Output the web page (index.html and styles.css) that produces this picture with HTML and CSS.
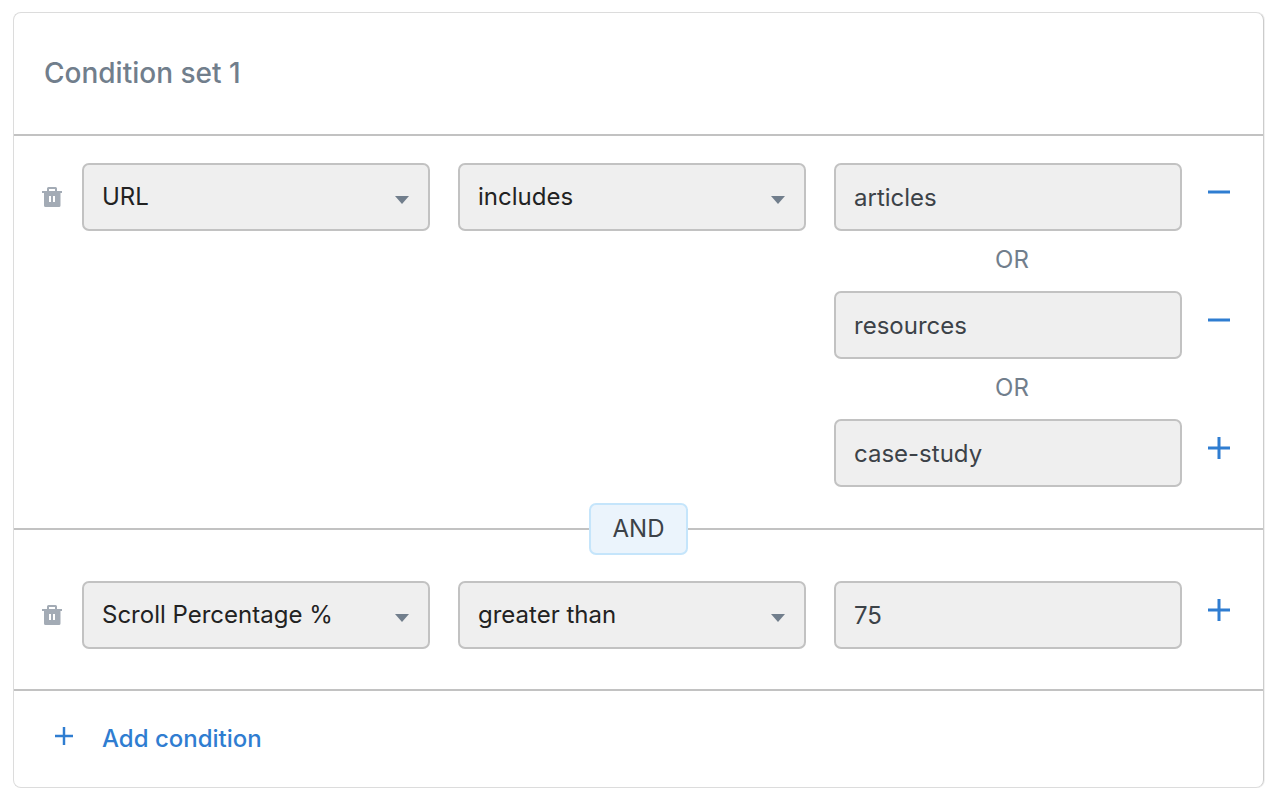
FILE: index.html
```html
<!DOCTYPE html>
<html lang="en">
<head>
    <meta charset="UTF-8">
    <meta name="viewport" content="width=device-width, initial-scale=1.0">
    <title>Condition set 1</title>
    <link rel="stylesheet" href="styles.css">
</head>
<body>
    <svg class="sprite" aria-hidden="true">
        <symbol id="trash" viewBox="0 0 20 20">
            <path fill-rule="evenodd" d="M5 4V1.500Q5 0 6.500 0H13.500Q15 0 15 1.500V4H20V6H18.500V18.500Q18.500 20 17 20H3.500Q2 20 2 18.500V6H0V4ZM7 4H13V2H7ZM7 9V15H9V9ZM11 9V15H13V9Z"/>
        </symbol>
        <symbol id="plus" viewBox="0 0 22 22">
            <path d="M0 11H22M11 0V22"/>
        </symbol>
        <symbol id="minus" viewBox="0 0 22 22">
            <path d="M0 11H22"/>
        </symbol>
    </svg>

    <form class="card">
        <header class="card-header">
            <h1>Condition set 1</h1>
        </header>

        <section class="condition">
            <button type="button" class="btn-trash" aria-label="Delete condition"><svg><use href="#trash"/></svg></button>
            <div class="fields">
                <select class="field" aria-label="Variable">
                    <option>URL</option>
                    <option>Scroll Percentage %</option>
                </select>
                <select class="field" aria-label="Operator">
                    <option>includes</option>
                    <option>greater than</option>
                </select>
                <div class="values">
                    <input class="field" type="text" value="articles" aria-label="Value 1">
                    <button type="button" class="btn-value" aria-label="Remove value"><svg><use href="#minus"/></svg></button>
                    <span class="or">OR</span>
                    <input class="field" type="text" value="resources" aria-label="Value 2">
                    <button type="button" class="btn-value" aria-label="Remove value"><svg><use href="#minus"/></svg></button>
                    <span class="or">OR</span>
                    <input class="field" type="text" value="case-study" aria-label="Value 3">
                    <button type="button" class="btn-value" aria-label="Add value"><svg><use href="#plus"/></svg></button>
                </div>
            </div>
        </section>

        <section class="condition condition-and">
            <span class="and">AND</span>
            <button type="button" class="btn-trash" aria-label="Delete condition"><svg><use href="#trash"/></svg></button>
            <div class="fields">
                <select class="field" aria-label="Variable">
                    <option>Scroll Percentage %</option>
                    <option>URL</option>
                </select>
                <select class="field" aria-label="Operator">
                    <option>greater than</option>
                    <option>includes</option>
                </select>
                <div class="values">
                    <input class="field" type="text" value="75" aria-label="Value">
                    <button type="button" class="btn-value" aria-label="Add value"><svg><use href="#plus"/></svg></button>
                </div>
            </div>
        </section>

        <footer class="card-footer">
            <button type="button" class="btn-add"><svg><use href="#plus"/></svg>Add condition</button>
        </footer>
    </form>
</body>
</html>
```
FILE: styles.css
```css
* {
    box-sizing: border-box;
}
body {
    margin: 0;
    padding: 12px 14px 14px 13px;
    background: #fff;
    font-family: Inter, "Liberation Sans", sans-serif;
    font-size: 24px;
    line-height: 32px;
    color: #3c4248;
}
.sprite {
    display: none;
}
.card {
    border: 1px solid #dcdcdc;
    border-right-color: #ccc;
    border-radius: 8px;
    box-shadow: 1px 0 0 #f0f0f0;
}
.card-header {
    padding: 44px 30px 45px;
}
h1 {
    margin: 0;
    font-size: 28px;
    font-weight: 500;
    line-height: 32px;
    color: #717e8c;
}
.condition {
    position: relative;
    display: flex;
    align-items: flex-start;
    gap: 20px;
    padding: 27px 35px 41px 28px;
    border-top: 2px solid #c2c2c2;
}
.condition-and {
    padding-top: 51px;
    padding-bottom: 40px;
}
.fields {
    flex: 1;
    display: grid;
    grid-template-columns: 1fr 1fr 1fr 18px;
    align-items: start;
    column-gap: 28px;
}
.values {
    grid-column: 3 / 5;
    display: grid;
    grid-template-columns: 1fr 18px;
    column-gap: 28px;
}
.field {
    width: 100%;
    height: 68px;
    margin: 0;
    padding: 0 18px;
    border: 2px solid #c2c2c2;
    border-radius: 7px;
    background: #efefef;
    font: inherit;
    color: #3c4248;
}
select.field {
    appearance: none;
    background: #efefef url("data:image/svg+xml,%3Csvg xmlns='http://www.w3.org/2000/svg' width='14' height='8'%3E%3Cpath d='M0 0H14L7 8Z' fill='%23717e8c'/%3E%3C/svg%3E") no-repeat right 19px top 31px;
    color: #222;
}
.or {
    grid-column: 1 / 3;
    padding: 13px 38px 15px 0;
    text-align: center;
    color: #717e8c;
}
.and {
    position: absolute;
    top: -1px;
    left: 50%;
    transform: translate(-50%, -50%);
    padding: 8px 22px;
    border: 2px solid #c5e5fb;
    border-radius: 7px;
    background: #ebf4fc;
}
button {
    display: flex;
    align-items: center;
    justify-content: center;
    padding: 0;
    border: 0;
    background: none;
    font: inherit;
    cursor: pointer;
}
.btn-trash {
    width: 20px;
    height: 68px;
}
.btn-trash svg {
    width: 20px;
    height: 20px;
    fill: #a3abb5;
}
.btn-value {
    width: 18px;
    height: 58px;
}
.btn-value svg {
    flex: none;
    width: 22px;
    height: 22px;
    stroke: #2f7dd1;
    stroke-width: 3;
}
.card-footer {
    padding: 32px 41px;
    border-top: 2px solid #c2c2c2;
}
.btn-add {
    align-items: flex-start;
    gap: 29px;
    font-weight: 500;
    color: #2f7dd1;
}
.btn-add svg {
    width: 18px;
    height: 18px;
    margin-top: 4px;
    stroke: #2f7dd1;
    stroke-width: 3;
}
```
